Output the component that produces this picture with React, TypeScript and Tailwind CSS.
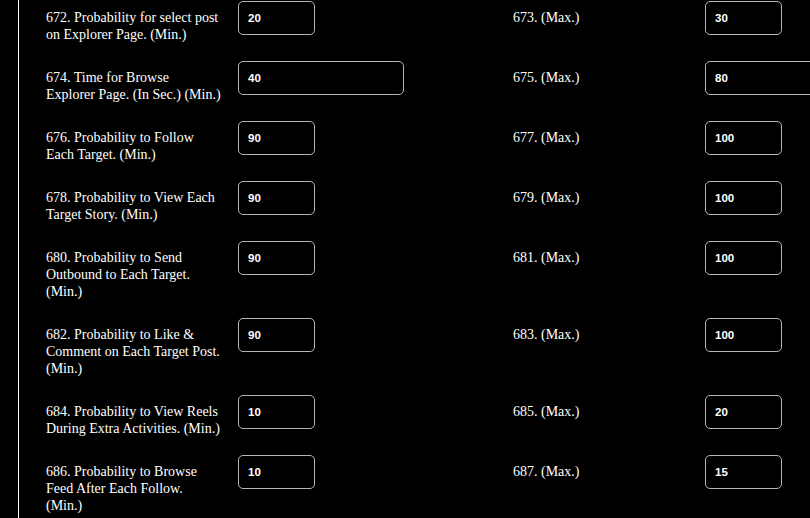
import React from "react";

type Row = {
  left: string[];
  leftVal: string;
  right: string;
  rightVal: string;
  wide?: boolean;
};

const rows: Row[] = [
  { left: ["672. Probability for select post", "on Explorer Page. (Min.)"], leftVal: "20", right: "673. (Max.)", rightVal: "30" },
  { left: ["674. Time for Browse", "Explorer Page. (In Sec.) (Min.)"], leftVal: "40", right: "675. (Max.)", rightVal: "80", wide: true },
  { left: ["676. Probability to Follow", "Each Target. (Min.)"], leftVal: "90", right: "677. (Max.)", rightVal: "100" },
  { left: ["678. Probability to View Each", "Target Story. (Min.)"], leftVal: "90", right: "679. (Max.)", rightVal: "100" },
  { left: ["680. Probability to Send", "Outbound to Each Target.", "(Min.)"], leftVal: "90", right: "681. (Max.)", rightVal: "100" },
  { left: ["682. Probability to Like &", "Comment on Each Target Post.", "(Min.)"], leftVal: "90", right: "683. (Max.)", rightVal: "100" },
  { left: ["684. Probability to View Reels", "During Extra Activities. (Min.)"], leftVal: "10", right: "685. (Max.)", rightVal: "20" },
  { left: ["686. Probability to Browse", "Feed After Each Follow.", "(Min.)"], leftVal: "10", right: "687. (Max.)", rightVal: "15" },
];

function Field({ lines, value, wide }: { lines: string[]; value: string; wide?: boolean }) {
  return (
    <div className="flex items-start w-[467px] shrink-0">
      <div className="w-[192px] shrink-0 pt-[8px] pb-[18px] text-[14px] leading-[17px] text-white font-['Liberation_Serif','Times_New_Roman',serif]">
        {lines.map((l, i) => (
          <div key={i} className="whitespace-nowrap">
            {l}
          </div>
        ))}
      </div>
      <input
        readOnly
        value={value}
        className={`${wide ? "w-[166px]" : "w-[77px]"} h-[34px] shrink-0 rounded-[5px] border border-[#b5b5b5] bg-black pl-[9px] text-[11.5px] font-bold text-white outline-none font-['Liberation_Sans',Arial,sans-serif]`}
      />
    </div>
  );
}

export default function App() {
  return (
    <div className="w-[810px] h-[518px] overflow-hidden bg-black">
      <div className="ml-[18px] h-full border-l border-white pl-[27px] pt-[1px]">
        <div className="flex flex-col w-[934px]">
          {rows.map((r, i) => (
            <div key={i} className="flex">
              <Field lines={r.left} value={r.leftVal} wide={r.wide} />
              <Field lines={[r.right]} value={r.rightVal} wide={r.wide} />
            </div>
          ))}
        </div>
      </div>
    </div>
  );
}
